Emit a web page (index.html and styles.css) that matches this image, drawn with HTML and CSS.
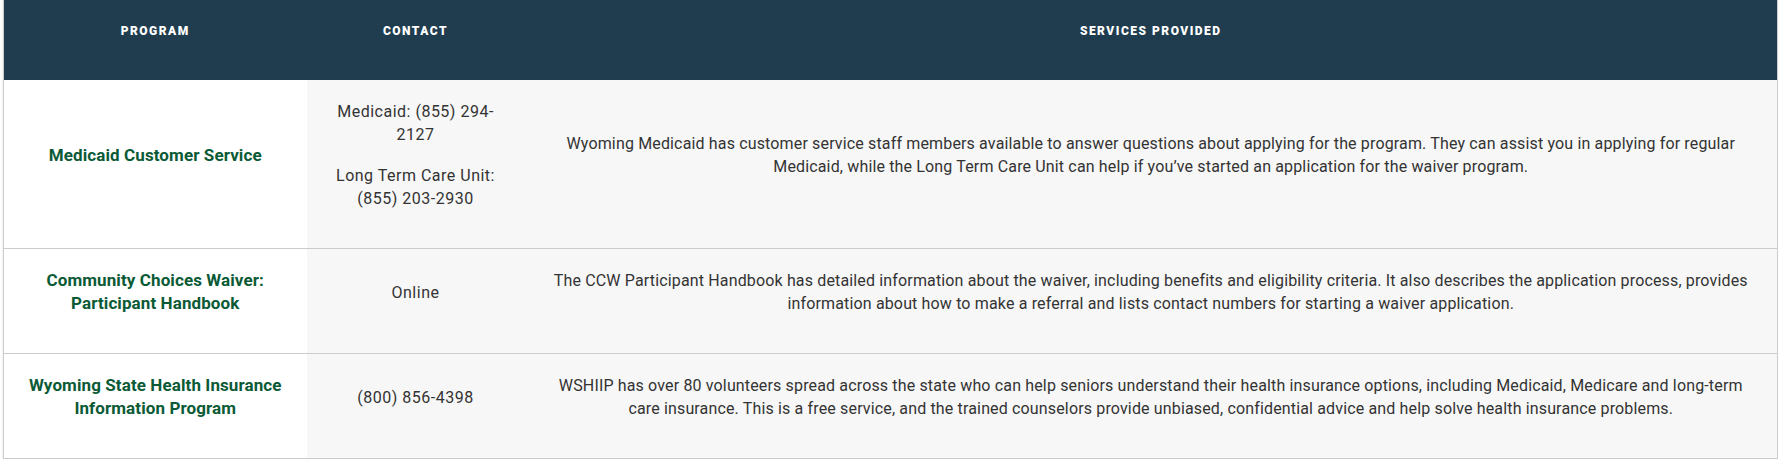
FILE: index.html
```html
<!DOCTYPE html>
<html lang="en">
<head>
<meta charset="utf-8">
<title>Wyoming Medicaid resources</title>
<link rel="stylesheet" href="styles.css">
</head>
<body>
<div class="wrap">
  <table class="resources">
    <colgroup>
      <col class="col-program">
      <col class="col-contact">
      <col class="col-services">
    </colgroup>
    <thead>
      <tr>
        <th>Program</th>
        <th>Contact</th>
        <th>Services Provided</th>
      </tr>
    </thead>
    <tbody>
      <tr>
        <td class="program"><p>Medicaid Customer Service</p></td>
        <td class="contact"><p>Medicaid: (855) 294-2127</p><p>Long Term Care Unit: (855) 203-2930</p></td>
        <td class="services"><p>Wyoming Medicaid has customer service staff members available to answer questions about applying for the program. They can assist you in applying for regular Medicaid, while the Long Term Care Unit can help if you’ve started an application for the waiver program.</p></td>
      </tr>
      <tr>
        <td class="program"><p>Community Choices Waiver: Participant Handbook</p></td>
        <td class="contact"><p>Online</p></td>
        <td class="services"><p>The CCW Participant Handbook has detailed information about the waiver, including benefits and eligibility criteria. It also describes the application process, provides information about how to make a referral and lists contact numbers for starting a waiver application.</p></td>
      </tr>
      <tr>
        <td class="program"><p>Wyoming State Health Insurance Information Program</p></td>
        <td class="contact"><p>(800) 856-4398</p></td>
        <td class="services"><p>WSHIIP has over 80 volunteers spread across the state who can help seniors understand their health insurance options, including Medicaid, Medicare and long-term care insurance. This is a free service, and the trained counselors provide unbiased, confidential advice and help solve health insurance problems.</p></td>
      </tr>
    </tbody>
  </table>
</div>
</body>
</html>
```
FILE: styles.css
```css
html, body {
  margin: 0;
  padding: 0;
  background: #ffffff;
}

.wrap {
  padding: 0 0 0 3px;
}

.resources {
  width: 100%;
  table-layout: fixed;
  border-collapse: collapse;
  border: 1px solid #cccccc;
  border-top: none;
  box-shadow: 0 1px 2px rgba(0, 0, 0, 0.14);
  font-family: Roboto, "Liberation Sans", Arial, sans-serif;
  font-size: 16px;
  line-height: 23px;
  color: #333333;
  text-align: center;
}

.col-program { width: 303px; }
.col-contact { width: 218px; }

.resources th {
  background: #1f3d4f;
  color: #ffffff;
  font-family: Roboto, "Liberation Sans", Arial, sans-serif;
  font-weight: 900;
  font-size: 12px;
  line-height: 16px;
  letter-spacing: 1.5px;
  text-transform: uppercase;
  padding: 23px 24px 41px;
  vertical-align: top;
  text-align: center;
}

.resources td {
  padding: 20px 24px;
  vertical-align: middle;
  border-bottom: 1px solid #cccccc;
  background: #f7f7f7;
}

.resources td p {
  margin: 0 0 18px;
}

.resources td.program {
  background: #ffffff;
  padding-left: 20px;
  padding-right: 20px;
  color: #0b5a36;
  font-weight: 700;
  font-size: 17px;
  letter-spacing: 0.1px;
}

.resources td.contact {
  letter-spacing: 0.5px;
}

.resources td.services {
  padding-left: 20px;
  padding-right: 20px;
  letter-spacing: 0.15px;
}
```
